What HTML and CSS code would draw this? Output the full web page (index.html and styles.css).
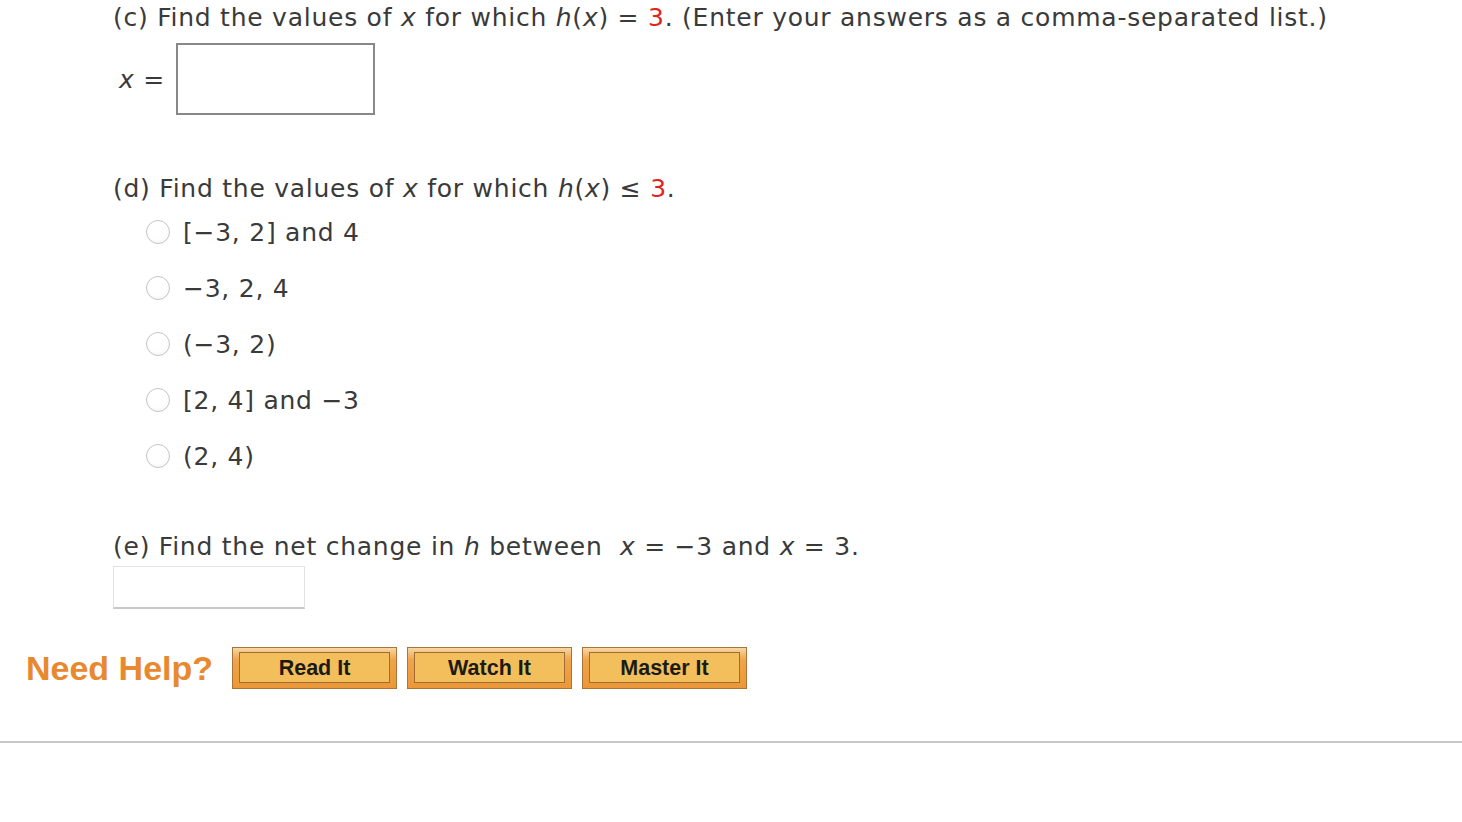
FILE: index.html
```html
<!DOCTYPE html>
<html>
<head>
<meta charset="utf-8">
<link rel="stylesheet" href="styles.css">
</head>
<body>
<div class="page">
  <div class="part part-c">
    <p class="q">(c) Find the values of <i>x</i> for which <i>h</i>(<i>x</i>) = <span class="red">3</span>. (Enter your answers as a comma-separated list.)</p>
    <div class="answer-row">
      <span class="label"><i>x</i> =</span>
      <span class="box"></span>
    </div>
  </div>

  <div class="part part-d">
    <p class="q">(d) Find the values of <i>x</i> for which <i>h</i>(<i>x</i>) ≤ <span class="red">3</span>.</p>
    <ul class="options">
      <li><span class="radio"></span><span>[−3, 2] and 4</span></li>
      <li><span class="radio"></span><span>−3, 2, 4</span></li>
      <li><span class="radio"></span><span>(−3, 2)</span></li>
      <li><span class="radio"></span><span>[2, 4] and −3</span></li>
      <li><span class="radio"></span><span>(2, 4)</span></li>
    </ul>
  </div>

  <div class="part part-e">
    <p class="q">(e) Find the net change in <i>h</i> between &nbsp;<i>x</i> = −3 and <i>x</i> = 3.</p>
    <span class="box2"></span>
  </div>
</div>

<div class="help">
  <span class="need">Need Help?</span>
  <span class="btn"><span class="btn-in">Read It</span></span>
  <span class="btn"><span class="btn-in">Watch It</span></span>
  <span class="btn"><span class="btn-in">Master It</span></span>
</div>
<div class="rule"></div>
</body>
</html>
```

FILE: styles.css
```css
html, body {
  margin: 0;
  padding: 0;
  background: #fff;
}
body {
  font-family: "DejaVu Sans", Verdana, sans-serif;
  font-size: 25px;
  letter-spacing: 0.75px;
  color: #3a3a3a;
}
.page {
  padding-left: 113px;
}
.q {
  margin: 0;
  line-height: 36px;
}
.red { color: #e2231a; }
i { font-style: italic; }

.answer-row {
  display: flex;
  align-items: center;
  margin-top: 7px;
}
.label {
  width: 63px;
  padding-left: 6px;
  box-sizing: border-box;
}
.box {
  display: block;
  width: 199px;
  height: 72px;
  border: 2px solid #888;
  box-sizing: border-box;
}
.part-d { margin-top: 56px; }
.options {
  list-style: none;
  margin: -3px 0 0 0;
  padding: 0 0 0 33px;
}
.options li {
  display: flex;
  align-items: center;
  height: 56px;
  gap: 13px;
}
.radio {
  width: 22px;
  height: 22px;
  border-radius: 50%;
  border: 1px solid #c4c4c4;
  background: radial-gradient(circle at 50% 40%, #fff 55%, #eee 100%);
  flex: none;
}
.part-e { margin-top: 45px; }
.box2 {
  display: block;
  width: 192px;
  height: 43px;
  border: 1px solid #e2e2e2;
  border-bottom: 2px solid #c8c8c8;
  box-sizing: border-box;
  margin-top: 1px;
}
.help {
  display: flex;
  align-items: center;
  margin-top: 38px;
  padding-left: 26px;
}
.need {
  font-family: "Liberation Sans", Arial, sans-serif;
  font-weight: bold;
  font-size: 34px;
  letter-spacing: 0;
  color: #e8892f;
  width: 206px;
}
.btn {
  display: flex;
  width: 165px;
  height: 42px;
  box-sizing: border-box;
  border: 1px solid #a8743a;
  background: linear-gradient(#f6d7a6 0, #f0a44a 30%, #eb9737 100%);
  padding: 4px 6px 5px 6px;
  margin-right: 10px;
}
.btn-in {
  flex: 1;
  display: flex;
  align-items: center;
  justify-content: center;
  padding-top: 2px;
  border: 1px solid #a06c35;
  background: #f2bf5c;
  font-family: "Liberation Sans", Arial, sans-serif;
  font-weight: bold;
  font-size: 21.5px;
  letter-spacing: 0;
  color: #1c1a14;
}
.rule {
  margin-top: 52px;
  height: 2px;
  background: #c8c8c8;
}
```
